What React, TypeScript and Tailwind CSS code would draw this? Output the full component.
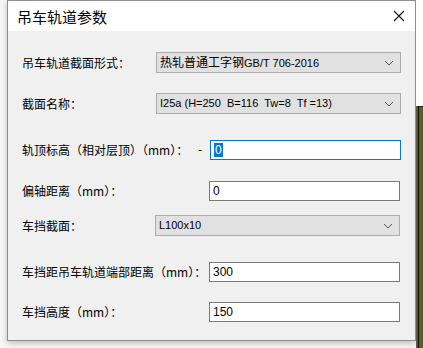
import React from 'react';

const CJK = { fontFamily: '"Noto Sans CJK SC", "Noto Sans", sans-serif' };
const LATIN = { fontFamily: '"Liberation Sans", "Noto Sans CJK SC", sans-serif' };

function Chevron() {
  return (
    <svg width="10" height="6" viewBox="0 0 10 6" className="shrink-0">
      <path d="M1 1 L5 5 L9 1" fill="none" stroke="#555" strokeWidth="1" />
    </svg>
  );
}

function Select({ value, width, latin }: { value: React.ReactNode; width: string; latin?: boolean }) {
  return (
    <div
      className={`${width} h-[21px] ml-auto flex items-center justify-between bg-[#e1e1e1] border border-[#adadad] pl-[3px] pr-[6px] text-black`}
    >
      <span
        className={`whitespace-pre leading-none ${latin ? 'text-[11px]' : 'text-[12px]'}`}
        style={latin ? LATIN : CJK}
      >
        {value}
      </span>
      <Chevron />
    </div>
  );
}

function Input({ value, focused }: { value: string; focused?: boolean }) {
  return (
    <div
      className={`w-[191px] h-[20px] bg-white border flex items-center pl-[3px] text-[12px] text-black ${
        focused ? 'border-[#0078d7]' : 'border-[#7a7a7a]'
      }`}
      style={{ fontFamily: '"Liberation Sans", sans-serif' }}
    >
      {focused ? (
        <span className="bg-[#0078d7] text-white leading-[14px] px-[1px]">{value}</span>
      ) : (
        <span className="leading-none">{value}</span>
      )}
    </div>
  );
}

function Label({ children }: { children: React.ReactNode }) {
  return (
    <span className="text-[12px] text-black whitespace-nowrap leading-none" style={CJK}>
      {children}
    </span>
  );
}

export default function App() {
  return (
    <div className="w-[423px] h-[348px] flex bg-[#f7f7f7] overflow-hidden">
      <div className="w-[7px] shrink-0" />

      {/* 对话框 */}
      <div className="w-[409px] h-[341px] shrink-0 flex flex-col border border-[#8f8f8f] bg-[#f0f0f0] shadow-[0_2px_6px_rgba(0,0,0,0.25)]">
        <div className="h-[30px] bg-white flex items-center justify-between pl-[9px] pr-[10px]">
          <span className="text-[15px] text-black leading-none" style={CJK}>
            吊车轨道参数
          </span>
          <svg width="12" height="12" viewBox="0 0 12 12">
            <path d="M1 1 L11 11 M11 1 L1 11" stroke="#111" strokeWidth="1.1" />
          </svg>
        </div>

        <div className="flex flex-col pl-[14px] pr-[14px]">
          <div className="flex items-center mt-[21px]">
            <Label>吊车轨道截面形式：</Label>
            <Select
              width="w-[245px]"
              value={
                <>
                  热轧普通工字钢
                  <span className="text-[11px]" style={LATIN}>GB/T 706-2016</span>
                </>
              }
            />
          </div>

          <div className="flex items-center mt-[20px]">
            <Label>截面名称：</Label>
            <Select width="w-[245px]" latin value="I25a (H=250  B=116  Tw=8  Tf =13)" />
          </div>

          <div className="flex items-center mt-[26px]">
            <Label>轨顶标高（相对层顶）（mm）：</Label>
            <span className="ml-auto mr-[8px] text-[12px] text-black leading-none">-</span>
            <Input value="0" focused />
          </div>

          <div className="flex items-center mt-[21px] pr-[1px]">
            <Label>偏轴距离（mm）：</Label>
            <div className="ml-auto">
              <Input value="0" />
            </div>
          </div>

          <div className="flex items-center mt-[14px] pr-[1px]">
            <Label>车挡截面：</Label>
            <Select width="w-[245px]" latin value="L100x10" />
          </div>

          <div className="flex items-center mt-[26px] pr-[1px]">
            <Label>车挡距吊车轨道端部距离（mm）：</Label>
            <div className="ml-auto">
              <Input value="300" />
            </div>
          </div>

          <div className="flex items-center mt-[20px] pr-[1px]">
            <Label>车挡高度（mm）：</Label>
            <div className="ml-auto">
              <Input value="150" />
            </div>
          </div>
        </div>
      </div>

      {/* 背景 CAD 窗口 */}
      <div className="flex-1 flex flex-col">
        <div className="h-[106px] bg-white" />
        <div className="flex-1 flex bg-[#5f5b31]">
          <div className="w-[2px]" />
          <div className="w-[1px] bg-[#111]" />
          <div className="flex-1 border-t border-[#222]" />
        </div>
      </div>
    </div>
  );
}
